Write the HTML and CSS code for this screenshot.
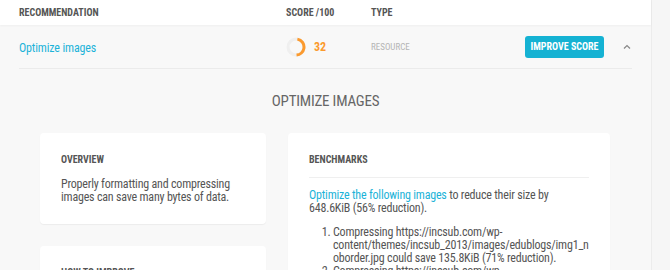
FILE: index.html
```html
<!DOCTYPE html>
<html lang="en">
<head>
  <meta charset="UTF-8" />
  <title>Recommendations</title>
  <link rel="stylesheet" href="styles.css">
</head>
<body>
  <div class="panel">
    <!-- table header -->
    <div class="head">
      <div class="col-name">Recommendation</div>
      <div class="col-score">Score /100</div>
      <div class="col-type">Type</div>
    </div>

    <div class="item">
      <div class="row">
        <div class="col-name"><a href="#" class="rec-link">Optimize images</a></div>
        <div class="col-score score">
          <svg class="ring" width="20" height="20" viewBox="0 0 20 20">
            <circle cx="10" cy="10" r="8" fill="none" stroke="#efefef" stroke-width="3"/>
            <circle cx="10" cy="10" r="8" fill="none" stroke="#fb9a2e" stroke-width="3"
              stroke-dasharray="23 50.3" transform="rotate(-80 10 10)"/>
          </svg>
          <span class="num">32</span>
        </div>
        <div class="col-type type">Resource</div>
        <button class="btn">Improve score</button>
        <span class="chev">
          <svg width="8" height="5" viewBox="0 0 8 5"><path d="M1 4.5 L4 1.5 L7 4.5" fill="none" stroke="#888" stroke-width="1.2"/></svg>
        </span>
      </div>

      <div class="details">
        <h2 class="title">Optimize images</h2>
        <div class="cards">
          <div class="side">
            <div class="card">
              <h3>Overview</h3>
              <p>Properly formatting and compressing images can save many bytes of data.</p>
            </div>
            <div class="card">
              <h3>How to improve</h3>
              <p>Compress and resize images.</p>
            </div>
          </div>
          <div class="card wide">
            <h3 class="ruled">Benchmarks</h3>
            <p><a href="#">Optimize the following images</a> to reduce their size by 648.6KiB (56% reduction).</p>
            <ol>
              <li>Compressing https://incsub.com/wp-content/themes/incsub_2013/images/edublogs/img1_noborder.jpg could save 135.8KiB (71% reduction).</li>
              <li>Compressing https://incsub.com/wp-content/themes/incsub_2013/images/edublogs/img2.jpg could save 98.2KiB (60% reduction).</li>
            </ol>
          </div>
        </div>
      </div>
    </div>
  </div>
</body>
</html>
```

FILE: styles.css
```css
body {
  margin: 0;
  background: #f6f6f6;
  font-family: Roboto, "Noto Sans", sans-serif;
  font-stretch: semi-condensed;
  color: #555;
  overflow: hidden;
}

.panel {
  width: 651px;
  background: #f8f8f8;
  border-right: 1px solid #ececec;
  min-height: 270px;
}

.head {
  display: flex;
  align-items: center;
  height: 25px;
  padding: 0 19px;
  background: #fff;
  box-shadow: 0 1px 2px rgba(0, 0, 0, 0.04);
  font-size: 10px;
  font-weight: bold;
  text-transform: uppercase;
  color: #555;
  font-stretch: condensed;
}

.col-name {
  width: 267px;
}

.col-score {
  width: 85px;
}

.col-type {
  width: 90px;
}

.item {
  padding: 0 19px;
}

.row {
  display: flex;
  align-items: center;
  height: 43px;
  border-bottom: 1px solid #ebebeb;
}

.rec-link {
  color: #1cb3d8;
  text-decoration: none;
  font-size: 12px;
  letter-spacing: -0.15px;
}

.score {
  display: flex;
  align-items: center;
  gap: 8px;
}

.ring {
  display: block;
}

.num {
  color: #fb9a2e;
  font-weight: bold;
  font-size: 12px;
}

.type {
  font-size: 9px;
  color: #b5b5b5;
  text-transform: uppercase;
}

.btn {
  margin-left: 64px;
  background: #15b2d3;
  color: #fff;
  border: none;
  border-radius: 3px;
  height: 22px;
  width: 79px;
  padding: 0;
  font-family: Roboto, sans-serif;
  font-size: 10px;
  font-weight: bold;
  text-transform: uppercase;
  font-stretch: condensed;
}

.chev {
  margin-left: 19px;
  display: flex;
}

.details {
  padding: 0 21px;
}

.title {
  margin: 23px 0 0;
  text-align: center;
  font-size: 15px;
  font-weight: normal;
  color: #666;
  text-transform: uppercase;
  font-stretch: condensed;
  letter-spacing: -0.2px;
}

.cards {
  display: flex;
  gap: 22px;
  margin-top: 23px;
}

.side {
  display: flex;
  flex-direction: column;
  gap: 22px;
  width: 226px;
}

.card {
  background: #fff;
  border-radius: 4px;
  box-shadow: 0 1px 1px rgba(0, 0, 0, 0.05);
  padding: 21px 21px 20px;
}

.card.wide {
  width: 280px;
  overflow-wrap: break-word;
}

.card h3 {
  margin: 0 0 13px;
  font-size: 10px;
  font-weight: bold;
  text-transform: uppercase;
  color: #555;
  font-stretch: condensed;
}

.card h3.ruled {
  padding-bottom: 12px;
  border-bottom: 1px solid #efefef;
  margin-bottom: 11px;
}

.card p {
  margin: 0;
  font-size: 12px;
  line-height: 13px;
  letter-spacing: -0.2px;
  color: #555;
}

.card p a {
  color: #1cb3d8;
  text-decoration: none;
}

.card ol {
  margin: 11px 0 0;
  padding-left: 24px;
  font-size: 12px;
  line-height: 13px;
  letter-spacing: -0.2px;
  color: #555;
}
```
